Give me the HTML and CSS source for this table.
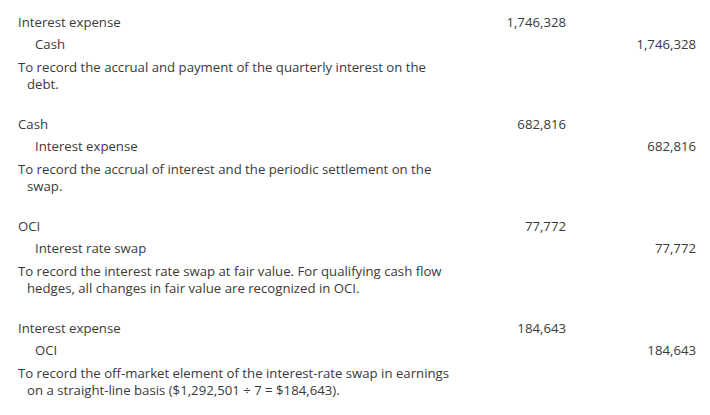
FILE: index.html
```html
<!DOCTYPE html>
<html>
<head>
<meta charset="utf-8">
<link rel="stylesheet" href="styles.css">
</head>
<body>
<div class="journal">
  <div class="entry">
    <div class="acct">Interest expense</div><div class="dr">1,746,328</div><div class="cr"></div>
    <div class="acct credit">Cash</div><div class="dr"></div><div class="cr">1,746,328</div>
    <div class="desc">To record the accrual and payment of the quarterly interest on the debt.</div>
  </div>
  <div class="entry">
    <div class="acct">Cash</div><div class="dr">682,816</div><div class="cr"></div>
    <div class="acct credit">Interest expense</div><div class="dr"></div><div class="cr">682,816</div>
    <div class="desc">To record the accrual of interest and the periodic settlement on the swap.</div>
  </div>
  <div class="entry">
    <div class="acct">OCI</div><div class="dr">77,772</div><div class="cr"></div>
    <div class="acct credit">Interest rate swap</div><div class="dr"></div><div class="cr">77,772</div>
    <div class="desc">To record the interest rate swap at fair value. For qualifying cash flow hedges, all changes in fair value are recognized in OCI.</div>
  </div>
  <div class="entry">
    <div class="acct">Interest expense</div><div class="dr">184,643</div><div class="cr"></div>
    <div class="acct credit">OCI</div><div class="dr"></div><div class="cr">184,643</div>
    <div class="desc">To record the off-market element of the interest-rate swap in earnings on a straight-line basis ($1,292,501 ÷ 7 = $184,643).</div>
  </div>
</div>
</body>
</html>
```
FILE: styles.css
```css
html, body {
  margin: 0;
  padding: 0;
  background: #ffffff;
}
body {
  font-family: "Open Sans", "DejaVu Sans", sans-serif;
  font-size: 13.2px;
  color: #3a3a3a;
  padding: 11px 14px 0 18px;
}
.entry {
  display: grid;
  grid-template-columns: 438px 110px 130px;
  margin-bottom: 20px;
}
.acct, .dr, .cr {
  line-height: 22px;
  height: 22px;
  white-space: nowrap;
}
.acct.credit {
  padding-left: 17px;
}
.dr, .cr {
  text-align: right;
}
.desc {
  grid-column: 1 / 2;
  line-height: 17px;
  padding: 4px 0 0 9px;
  text-indent: -9px;
}
```
